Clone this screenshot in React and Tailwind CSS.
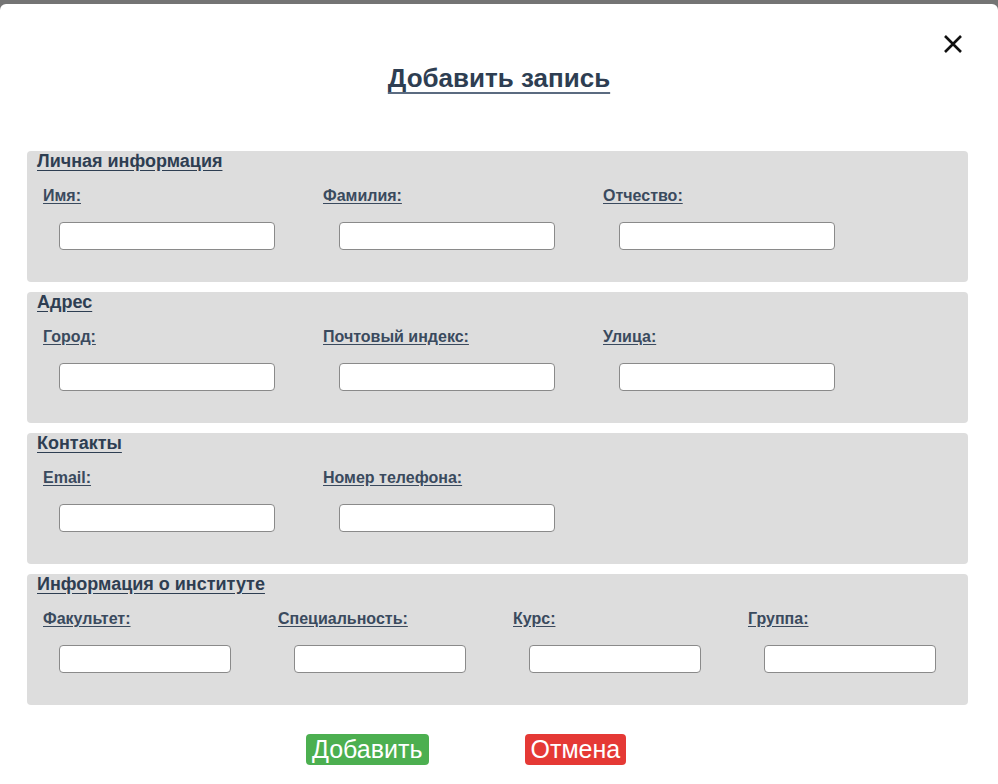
import React from "react";

const sections = [
  {
    title: "Личная информация",
    cols: "w-[280px]",
    input: "w-[216px]",
    fields: ["Имя:", "Фамилия:", "Отчество:"],
  },
  {
    title: "Адрес",
    cols: "w-[280px]",
    input: "w-[216px]",
    fields: ["Город:", "Почтовый индекс:", "Улица:"],
  },
  {
    title: "Контакты",
    cols: "w-[280px]",
    input: "w-[216px]",
    fields: ["Email:", "Номер телефона:"],
  },
  {
    title: "Информация о институте",
    cols: "w-[235px]",
    input: "w-[172px]",
    fields: ["Факультет:", "Специальность:", "Курс:", "Группа:"],
  },
];

const CloseIcon = () => (
  <svg width="20" height="20" viewBox="0 0 20 20" fill="none" stroke="#111" strokeWidth="2.6">
    <path d="M2 2L18 18M18 2L2 18" />
  </svg>
);

function Section({ title, cols, input, fields }) {
  return (
    <div className="h-[131px] rounded bg-[#dddddd] px-[10px]">
      <div className="pt-[1px] text-[18px] font-bold leading-[19px] text-[#2e3e52] underline underline-offset-[3px]">
        {title}
      </div>
      <div className="mt-[16px] flex">
        {fields.map((f) => (
          <div key={f} className={`${cols} shrink-0 pl-[6px]`}>
            <label className="block text-[16px] font-bold leading-[17px] text-[#3a4a5e] underline underline-offset-2">
              {f}
            </label>
            <input
              type="text"
              className={`${input} mt-[18px] ml-[16px] h-[28px] rounded border border-[#8a8a8a] bg-white`}
            />
          </div>
        ))}
      </div>
    </div>
  );
}

export default function App() {
  return (
    <div className="min-h-[784px] bg-[#747474] pt-[4px] font-['Liberation_Sans',Arial,sans-serif]">
      <div className="relative min-h-[780px] rounded-t-md bg-white px-[27px] pt-[59px]">
        <button className="absolute right-[35px] top-[30px]" aria-label="Закрыть">
          <CloseIcon />
        </button>
        <h2 className="text-center text-[26px] font-bold leading-[30px] text-[#2e3e52] underline underline-offset-[5px] decoration-[#5b6b80]">
          Добавить запись
        </h2>
        <div className="mt-[58px] flex w-[941px] flex-col gap-[10px]">
          {sections.map((s) => (
            <Section key={s.title} {...s} />
          ))}
        </div>
        <div className="mt-[29px] flex">
          <button className="ml-[279px] h-[31px] rounded-sm bg-[#4caf50] px-[6px] text-[25px] leading-[31px] text-white">
            Добавить
          </button>
          <button className="ml-[96px] h-[31px] rounded-sm bg-[#e53935] px-[6px] text-[25px] leading-[31px] text-white">
            Отмена
          </button>
        </div>
      </div>
    </div>
  );
}
